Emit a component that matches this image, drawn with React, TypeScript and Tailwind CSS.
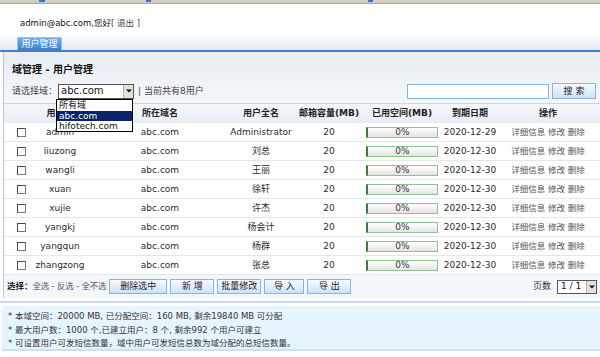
import React from "react";

const rows = [
  ["admin", "Administrator", "2020-12-29"],
  ["liuzong", "刘总", "2020-12-30"],
  ["wangli", "王丽", "2020-12-30"],
  ["xuan", "徐轩", "2020-12-30"],
  ["xujie", "许杰", "2020-12-30"],
  ["yangkj", "杨会计", "2020-12-30"],
  ["yangqun", "杨群", "2020-12-30"],
  ["zhangzong", "张总", "2020-12-30"],
];

const cols = "grid grid-cols-[26px_60px_140px_62px_74px_72px_64px_92px]";

function Btn({ children, w }: { children: React.ReactNode; w: string }) {
  return (
    <div
      className={`${w} h-[15px] flex items-center justify-center border border-[#8eb3d7] bg-gradient-to-b from-[#f6fafe] to-[#cfe1f3] text-[#222] text-[9px]`}
    >
      {children}
    </div>
  );
}

function Arrow() {
  return (
    <div className="w-[10px] h-full flex items-center justify-center bg-[#e4e1da] border-l border-[#b8b4ac]">
      <svg width="6" height="4" viewBox="0 0 6 4">
        <path d="M0 0.5 H6 L3 3.5 Z" fill="#111" />
      </svg>
    </div>
  );
}

export default function App() {
  return (
    <div
      className="w-[600px] h-[357px] bg-white overflow-hidden relative text-[9px] leading-none text-[#2a2a2a]"
      style={{ fontFamily: '"DejaVu Sans", "Noto Sans CJK SC", sans-serif' }}
    >
      {/* top strip */}
      <div className="h-[4px] bg-[#d3cdc2] border-b border-[#aaa49a] relative">
        <div className="absolute left-[39px] top-0 w-[6px] h-[2px] bg-[#3a6fc0]" />
        <div className="absolute left-[146px] top-0 w-[5px] h-[2px] bg-[#3a6fc0]" />
        <div className="absolute left-[368px] top-0 w-[5px] h-[2px] bg-[#3a6fc0]" />
      </div>

      {/* welcome */}
      <div className="h-[29px] flex items-end pl-[20px] pb-[6px] text-[8.5px] text-[#111]">
        <span>admin@abc.com,您好</span>
        <span className="text-[#444]">[ 退出 ]</span>
      </div>

      {/* tab band */}
      <div className="h-[17px] bg-gradient-to-b from-[#ffffff] to-[#e3e9f0] flex items-end pl-[17px]">
        <div className="w-[45px] h-[13px] rounded-t-[2px] border border-b-0 border-[#9cc2e8] bg-gradient-to-b from-[#74ace4] to-[#3b80cb] text-white flex items-center justify-center text-[9px]">
          用户管理
        </div>
      </div>
      <div className="h-[2px] bg-[#3d82c8]" />

      {/* panel */}
      <div className="ml-[3px] border-l border-[#b9c7d6]">
        <div className="h-[51px] bg-gradient-to-b from-[#e8edf3] to-[#f4f7fa] pl-[8px] pr-[4px] flex flex-col">
          <div className="mt-[13px] font-bold text-[10px] text-[#111]">域管理 - 用户管理</div>
          <div className="mt-[8px] flex items-center h-[16px]">
            <span className="text-[#444]">请选择域：</span>
            <div className="ml-[1px] w-[76px] h-[15px] border border-[#555] bg-white flex">
              <div className="flex-1 flex items-center pl-[2px] text-[10px] text-[#111]">abc.com</div>
              <Arrow />
            </div>
            <span className="ml-[4px] text-[#444]">| 当前共有8用户</span>
            <div className="ml-auto w-[142px] h-[15px] border border-[#84b5d8] bg-white" />
            <div className="ml-[3px]">
              <Btn w="w-[44px] h-[16px]">搜 索</Btn>
            </div>
          </div>
        </div>

        {/* table header */}
        <div className={`${cols} h-[20px] items-center border-t border-[#c9d7e4] bg-gradient-to-b from-[#f4f7fa] to-[#e7edf3] font-bold text-[#222]`}>
          <div />
          <div className="text-center">用户名</div>
          <div className="text-center">所在域名</div>
          <div className="text-center">用户全名</div>
          <div className="text-center">邮箱容量(MB)</div>
          <div className="text-center">已用空间(MB)</div>
          <div className="text-center">到期日期</div>
          <div className="text-center">操作</div>
        </div>

        {rows.map(([u, n, d]) => (
          <div key={u} className={`${cols} h-[19px] items-center bg-white border-b border-[#e1e7ec]`}>
            <div className="flex justify-end pr-[4px]">
              <div className="w-[9px] h-[9px] border border-[#7a7a7a] border-t-[#4a4a4a] border-l-[#4a4a4a] bg-white" />
            </div>
            <div className="text-center">{u}</div>
            <div className="text-center">abc.com</div>
            <div className="text-center whitespace-nowrap">{n}</div>
            <div className="text-center">20</div>
            <div className="flex justify-center">
              <div className="w-[72px] h-[11px] border border-[#93c193] border-l-[2px] border-l-[#3d7d3d] bg-gradient-to-b from-[#ffffff] to-[#e4e4e4] flex items-center justify-center text-[#333]">
                0%
              </div>
            </div>
            <div className="text-center">{d}</div>
            <div className="text-center text-[#555] whitespace-nowrap text-[8.5px]">详细信息 修改 删除</div>
          </div>
        ))}

        {/* toolbar */}
        <div className="h-[23px] bg-[#f1f7fc] flex items-center pl-[3px] pr-[3px]">
          <span className="font-bold text-[#222] text-[8.5px]">选择：</span>
          <span className="text-[#555] text-[8.5px] tracking-[-0.2px]">全选 - 反选 - 全不选</span>
          <div className="ml-[3px] flex gap-[3px]">
            <Btn w="w-[58px]">删除选中</Btn>
            <Btn w="w-[44px]">新 增</Btn>
            <Btn w="w-[44px]">批量修改</Btn>
            <Btn w="w-[40px]">导 入</Btn>
            <Btn w="w-[44px]">导 出</Btn>
          </div>
          <span className="ml-auto text-[#333]">页数</span>
          <div className="ml-[6px] w-[40px] h-[14px] border border-[#555] bg-white flex">
            <div className="flex-1 flex items-center pl-[3px] text-[#111]">1 / 1</div>
            <Arrow />
          </div>
        </div>
      </div>

      {/* info */}
      <div className="mt-[3px] h-[2px] bg-[#cadcec]" />
      <div className="mt-[3px] ml-[2px] h-[45px] bg-[#e6f4fe] border-b-2 border-[#cfdfec] pl-[6px] pt-[6px] flex flex-col gap-[5px] text-[#333] text-[8.5px]">
        <div>* 本域空间：20000 MB, 已分配空间：160 MB, 剩余19840 MB 可分配</div>
        <div>* 最大用户数：1000 个,已建立用户：8 个, 剩余992 个用户可建立</div>
        <div>* 可设置用户可发短信数量，域中用户可发短信总数为域分配的总短信数量。</div>
      </div>

      {/* dropdown overlay */}
      <div className="absolute left-[56px] top-[99px] w-[77px] h-[33px] border border-[#000] bg-white flex flex-col text-[9px] text-[#111] overflow-hidden">
        <div className="h-[11px] flex items-center pl-[2px]">所有域</div>
        <div className="h-[10px] flex items-center pl-[2px] bg-[#0a246a] text-white">abc.com</div>
        <div className="h-[10px] flex items-center pl-[2px]">hifotech.com</div>
      </div>
    </div>
  );
}
